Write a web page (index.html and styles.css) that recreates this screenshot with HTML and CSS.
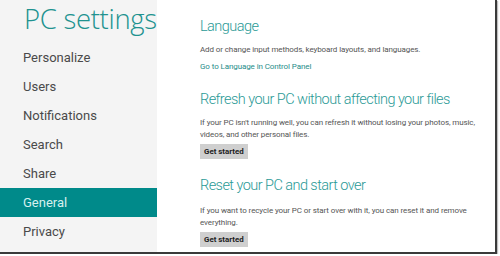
FILE: index.html
```html
<!DOCTYPE html>
<html lang="en">
<head>
    <meta charset="UTF-8">
    <title>PC settings</title>
    <link rel="stylesheet" href="styles.css">
</head>
<body>
    <div class="window">
        <div class="sidebar">
            <h1>PC settings</h1>
            <ul class="nav">
                <li>Personalize</li>
                <li>Users</li>
                <li>Notifications</li>
                <li>Search</li>
                <li>Share</li>
                <li class="active">General</li>
                <li>Privacy</li>
            </ul>
        </div>
        <div class="main">
            <h2 class="first">Language</h2>
            <p class="desc">Add or change input methods, keyboard layouts, and languages.</p>
            <a class="link" href="#">Go to Language in Control Panel</a>

            <h2>Refresh your PC without affecting your files</h2>
            <p class="desc">If your PC isn't running well, you can refresh it without losing your photos, music, videos, and other personal files.</p>
            <button>Get started</button>

            <h2>Reset your PC and start over</h2>
            <p class="desc reset">If you want to recycle your PC or start over with it, you can reset it and remove everything.</p>
            <button>Get started</button>
        </div>
    </div>
</body>
</html>
```

FILE: styles.css
```css
body {
    margin: 0;
    background-color: #fff;
    font-family: Roboto, Arial, sans-serif;
}
.window {
    display: flex;
    width: 495px;
    height: 252px;
    border-right: 2px solid #3a3a3a;
    border-bottom: 2px solid #3a3a3a;
    box-shadow: 1px 1px 1px rgba(0,0,0,0.25);
    overflow: hidden;
}
.sidebar {
    width: 157px;
    flex-shrink: 0;
    background-color: #f4f4f4;
}
h1 {
    margin: 0;
    height: 43px;
    padding-left: 24px;
    font-family: "Open Sans", Arial, sans-serif;
    font-size: 27.5px;
    font-weight: 300;
    line-height: 38px;
    color: #20928f;
    letter-spacing: -0.3px;
}
.nav {
    list-style: none;
    margin: 0;
    padding: 0;
}
.nav li {
    height: 29px;
    line-height: 29px;
    padding-left: 23px;
    font-size: 13px;
    color: #4a4a4a;
}
.nav li.active {
    background-color: #008a8a;
    color: #d6f0ef;
}
.main {
    padding-left: 43px;
    flex: 1;
}
h2 {
    margin: 17px 0 0;
    font-size: 14.5px;
    font-weight: 300;
    line-height: 20px;
    color: #2a9a96;
    letter-spacing: -0.55px;
    white-space: nowrap;
}
h2.first {
    margin-top: 17px;
}
.desc {
    margin: 7px 0 0;
    width: 285px;
    font-size: 8px;
    line-height: 12px;
    color: #555;
    letter-spacing: -0.1px;
}
.desc.reset {
    margin-top: 9px;
}
.link {
    display: block;
    margin-top: 5px;
    font-size: 8px;
    line-height: 12px;
    color: #1f8d8a;
    text-decoration: none;
    letter-spacing: -0.1px;
}
button {
    display: block;
    margin-top: 3px;
    height: 15px;
    padding: 0 4px;
    border: none;
    background-color: #cfcfcf;
    font-family: Roboto, Arial, sans-serif;
    font-size: 7.9px;
    font-weight: 700;
    color: #222;
}
```
